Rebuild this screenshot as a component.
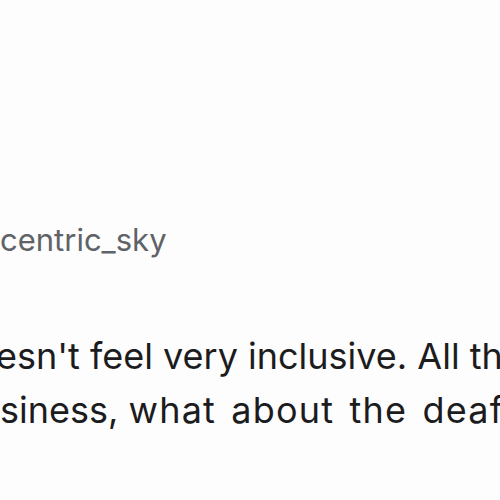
export default function App() {
  return (
    <div
      className="w-[500px] h-[500px] overflow-hidden bg-[#fdfdfd] pt-[220px]"
      style={{ fontFamily: "Inter, 'Noto Sans', sans-serif" }}
    >
      <div className="whitespace-nowrap text-[31px] leading-[40px] text-[#5f6368]">
        centric_sky
      </div>
      <div className="mt-[69px] whitespace-nowrap text-[36px] leading-[54px] text-[#1c1c1e]">
        <p className="-ml-[4px]">esn't feel very inclusive. All the</p>
        <p>
          siness,{" "}
          <span className="tracking-[1.2px] [word-spacing:4px]">what about the deaf</span>
        </p>
      </div>
    </div>
  );
}
